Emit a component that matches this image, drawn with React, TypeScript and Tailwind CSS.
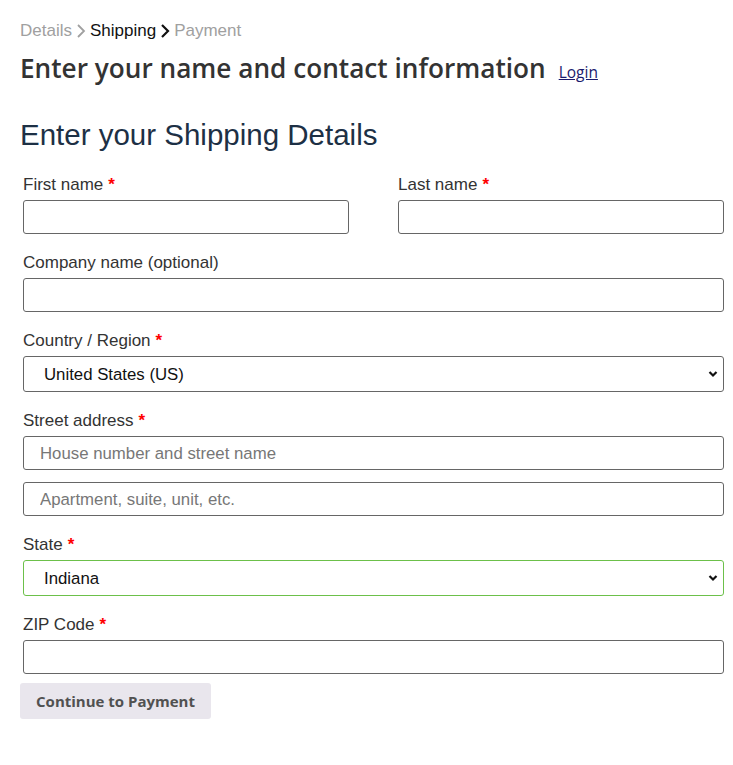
import React from "react";

const Req = () => <span className="text-[#ff0000] font-bold ml-[5px]">*</span>;

const Label = ({ children, req = true }: { children: React.ReactNode; req?: boolean }) => (
  <label className="block h-[18px] leading-[20px] text-[17px] text-[#333] mb-[7px]">
    {children}
    {req && <Req />}
  </label>
);

const Input = ({ placeholder }: { placeholder?: string }) => (
  <input
    placeholder={placeholder}
    className="block w-full h-[34px] border border-[#666] rounded-[3px] px-[16px] pt-[1px] text-[16.8px] text-[#333] placeholder:text-[#777] bg-white outline-none"
  />
);

const Select = ({ value, green = false }: { value: string; green?: boolean }) => (
  <div
    className={`relative h-[36px] rounded-[3px] border bg-white ${green ? "border-[#6cc04a]" : "border-[#666]"}`}
  >
    <div className="h-full flex items-center pl-[20px] pt-[1px] text-[16.8px] text-[#111]">{value}</div>
    <svg
      className="absolute right-[5px] top-1/2 -translate-y-1/2"
      width="10"
      height="8"
      viewBox="0 0 10 8"
    >
      <path d="M1.5 2 L5 5.5 L8.5 2" stroke="#111" strokeWidth="2.2" fill="none" />
    </svg>
  </div>
);

export default function App() {
  return (
    <div className="w-[733px] h-[765px] bg-white pl-[20px] pt-[21px]" style={{ fontFamily: '"Liberation Sans", Arial, sans-serif' }}>
      <div className="flex items-center h-[20px] text-[17px] leading-[20px]">
        <span className="text-[#a0a0a0]">Details</span>
        <svg width="14" height="16" viewBox="0 0 14 16" className="mx-[2px]">
          <path d="M4 2 L10 8 L4 14" stroke="#a0a0a0" strokeWidth="1.8" fill="none" />
        </svg>
        <span className="text-[#111]">Shipping</span>
        <svg width="14" height="16" viewBox="0 0 14 16" className="mx-[2px]">
          <path d="M4 2 L10 8 L4 14" stroke="#111" strokeWidth="2.2" fill="none" />
        </svg>
        <span className="text-[#a0a0a0]">Payment</span>
      </div>
      <div className="flex items-baseline mt-[11px] h-[32px]">
        <h1
          className="text-[26.2px] leading-[32px] font-semibold text-[#333]"
          style={{ fontFamily: '"Open Sans", "Noto Sans", sans-serif' }}
        >
          Enter your name and contact information
        </h1>
        <a
          href="#"
          className="ml-[13px] text-[15.5px] text-[#1a1a6e] underline"
          style={{ fontFamily: '"Open Sans", "Noto Sans", sans-serif' }}
        >
          Login
        </a>
      </div>
      <h2 className="mt-[35px] text-[29.5px] leading-[32px] text-[#1d3045]">Enter your Shipping Details</h2>
      <div className="ml-[3px] w-[701px] mt-[24px]">
        <div className="flex gap-[49px]">
          <div className="w-[326px]">
            <Label>First name</Label>
            <Input />
          </div>
          <div className="w-[326px]">
            <Label>Last name</Label>
            <Input />
          </div>
        </div>
        <div className="mt-[19px]">
          <Label req={false}>Company name (optional)</Label>
          <Input />
        </div>
        <div className="mt-[19px]">
          <Label>Country / Region</Label>
          <Select value="United States (US)" />
        </div>
        <div className="mt-[19px]">
          <Label>Street address</Label>
          <Input placeholder="House number and street name" />
          <div className="mt-[12px]">
            <Input placeholder="Apartment, suite, unit, etc." />
          </div>
        </div>
        <div className="mt-[19px]">
          <Label>State</Label>
          <Select value="Indiana" green />
        </div>
        <div className="mt-[19px]">
          <Label>ZIP Code</Label>
          <Input />
        </div>
      </div>
      <button
        className="mt-[9px] w-[191px] h-[36px] bg-[#e9e6ed] rounded-[3px] text-[15px] font-bold text-[#515151]"
        style={{ fontFamily: '"Open Sans", "Noto Sans", sans-serif' }}
      >
        Continue to Payment
      </button>
    </div>
  );
}
